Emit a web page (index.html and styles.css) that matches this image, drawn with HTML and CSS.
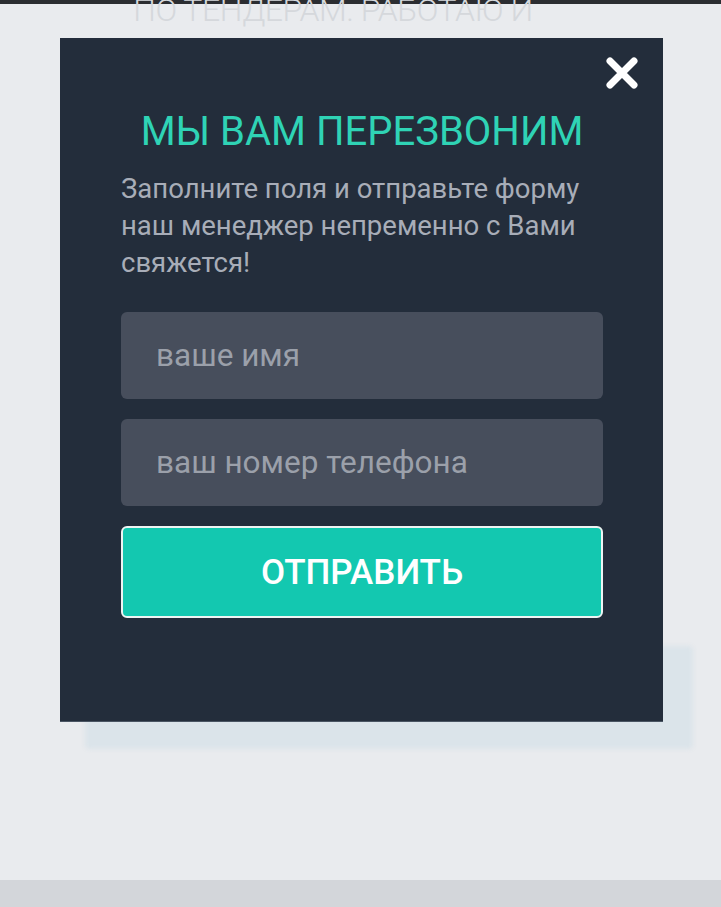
FILE: index.html
```html
<!DOCTYPE html>
<html lang="ru">
<head>
    <meta charset="UTF-8">
    <meta name="viewport" content="width=device-width, initial-scale=1.0">
    <title>Обратный звонок</title>
    <link rel="stylesheet" href="styles.css">
</head>
<body>
    <div class="topline"></div>

    <div class="page">
        <p class="behind-title">ПО ТЕНДЕРАМ. РАБОТАЮ И</p>

        <div class="modal-wrap">
            <div class="modal-shadow"></div>

            <div class="modal">
                <button class="close-btn" aria-label="Закрыть">
                    <svg width="38" height="38" viewBox="0 0 38 38">
                        <path d="M7 7 L31 31 M31 7 L7 31" stroke="#ffffff" stroke-width="7" stroke-linecap="round"/>
                    </svg>
                </button>

                <h2 class="modal-title">МЫ ВАМ ПЕРЕЗВОНИМ</h2>
                <p class="modal-text">Заполните поля и отправьте форму наш менеджер непременно с Вами свяжется!</p>

                <form class="callback-form">
                    <input type="text" placeholder="ваше имя">
                    <input type="tel" placeholder="ваш номер телефона">
                    <button type="button" class="send-btn">ОТПРАВИТЬ</button>
                </form>
            </div>
        </div>
    </div>

    <div class="bottom-bar"></div>
</body>
</html>
```

FILE: styles.css
```css
body {
    font-family: Roboto, 'Noto Sans', sans-serif;
    margin: 0;
    background-color: #e9ebee;
    height: 907px;
    overflow: hidden;
    display: flex;
    flex-direction: column;
}

.topline {
    height: 4px;
    background: #2b2d31;
}

.page {
    flex: 1;
    position: relative;
}

.behind-title {
    margin: -11px 0 0;
    text-align: center;
    font-size: 32px;
    font-weight: 300;
    color: #d5d8dc;
    line-height: 34px;
    padding-right: 55px;
    letter-spacing: -0.5px;
}

.modal-wrap {
    position: relative;
    margin: 11px 0 0 60px;
    width: 603px;
}

.modal-shadow {
    position: absolute;
    left: 25px;
    right: -30px;
    bottom: -27px;
    height: 103px;
    background: #dbe4ea;
    border-radius: 4px;
    filter: blur(2px);
}

.modal {
    position: relative;
    background: #232d3b;
    height: 684px;
    box-sizing: border-box;
    padding: 70px 60px 0 61px;
    border-bottom: 1px solid #4a5563;
}

.close-btn {
    position: absolute;
    top: 16px;
    right: 22px;
    background: none;
    border: none;
    padding: 0;
    cursor: pointer;
}

.close-btn svg {
    display: block;
}

.modal-title {
    margin: 0;
    text-align: center;
    font-size: 40px;
    font-weight: 400;
    color: #2fd3b5;
    line-height: 48px;
}

.modal-text {
    margin: 14px 0 0;
    font-size: 27.5px;
    line-height: 37px;
    color: #a8adb8;
}

.callback-form {
    display: flex;
    flex-direction: column;
    gap: 20px;
    margin-top: 31px;
}

.callback-form input {
    height: 87px;
    box-sizing: border-box;
    border: none;
    border-radius: 6px;
    background: #474e5c;
    padding: 0 35px;
    font-family: inherit;
    font-size: 31.5px;
    color: #e0e3e8;
    outline: none;
}

.callback-form input::placeholder {
    color: #9ba0aa;
}

.send-btn {
    height: 92px;
    border: 2px solid #eef4f3;
    border-radius: 6px;
    background: #13c8b0;
    color: #ffffff;
    font-family: inherit;
    font-size: 35px;
    font-weight: 500;
    cursor: pointer;
}

.bottom-bar {
    height: 27px;
    background: #d3d6da;
}
```
